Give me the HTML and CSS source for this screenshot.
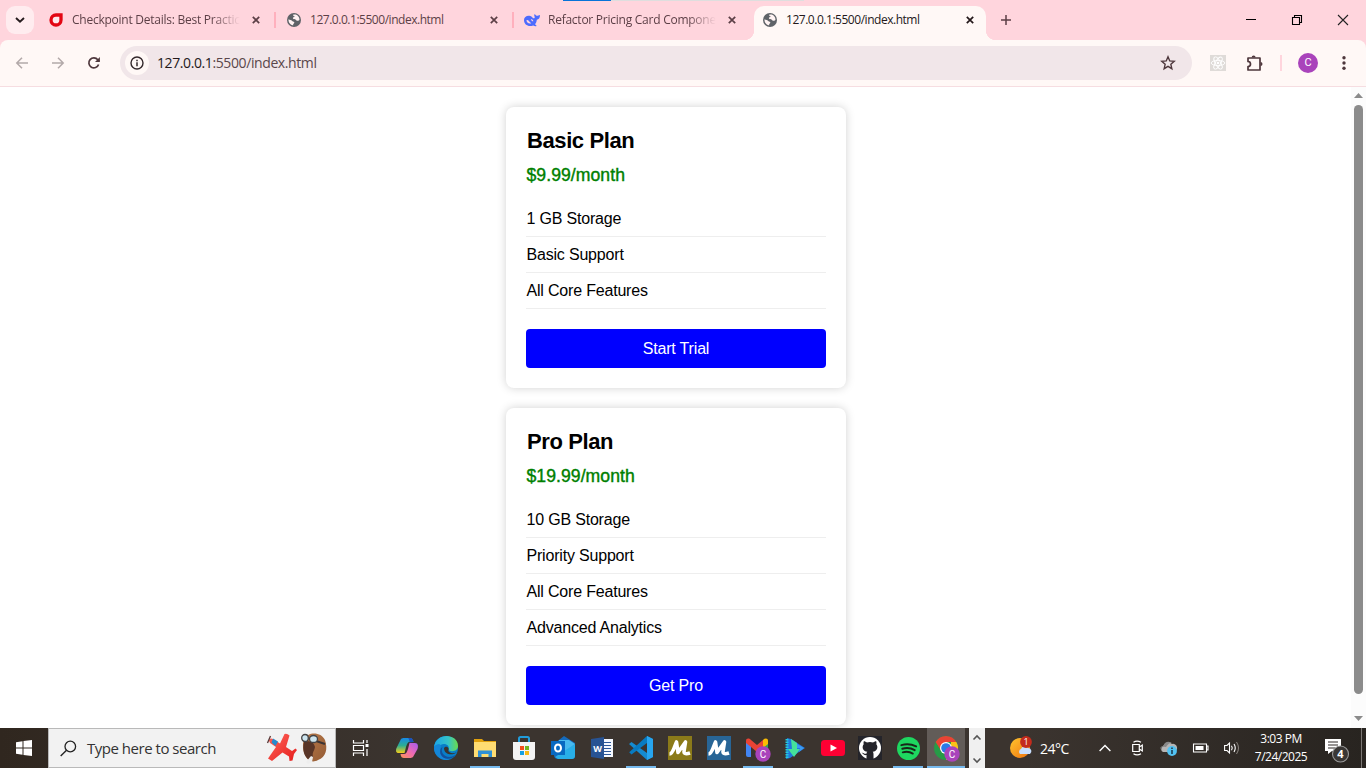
FILE: index.html
```html
<!DOCTYPE html>
<html lang="en">
<head>
<meta charset="utf-8">
<title>Pricing plans</title>
<link rel="stylesheet" href="styles.css">
</head>
<body>
<svg class="defs" width="0" height="0">
  <defs>
    <symbol id="close" viewBox="0 0 8 8"><path d="M.8.8l6.4 6.4M7.2.8L.8 7.2" fill="none" stroke="currentColor" stroke-width="1.7"/></symbol>
    <symbol id="globe" viewBox="0 0 14 14"><circle cx="7" cy="7" r="7" fill="#5f6368"/><path d="M1.500 6.300c1.400.8 2.700.5 3.700 1.600.9 1 2.300.5 2.100 1.800-.2 1-1.300.8-1.200 2.700C3.200 12 1.300 9.500 1.500 6.300z" fill="#fff3f3"/><path d="M6.300 1.500h2.500c2.200.8 3.600 2.700 3.700 5-.8 1.800-2.300 1.600-3.300.7-.5-1.200-1.500-1-2.800-1.300-1-.6-.4-1.600.8-1.800 1-.2.3-1.300-.9-1.200z" fill="#fff3f3"/></symbol>
    <linearGradient id="gCop1" x1="0" y1="0" x2="0" y2="1"><stop offset="0" stop-color="#1689e8"/><stop offset=".5" stop-color="#2cad93"/><stop offset="1" stop-color="#f5cf19"/></linearGradient>
    <linearGradient id="gCop2" x1="1" y1="0" x2="0" y2="1"><stop offset="0" stop-color="#a45bf0"/><stop offset=".5" stop-color="#ed69b3"/><stop offset="1" stop-color="#ff9655"/></linearGradient>
    <linearGradient id="gEdge" x1="0" y1="0" x2="1" y2="0"><stop offset="0" stop-color="#1ba4e8"/><stop offset=".6" stop-color="#35c4c7"/><stop offset="1" stop-color="#6bdc4b"/></linearGradient>
    <linearGradient id="gPlane" x1="0" y1="0" x2="1" y2="1"><stop offset="0" stop-color="#ff665b"/><stop offset="1" stop-color="#e51d1c"/></linearGradient>
    <linearGradient id="gPilot" x1="0" y1="0" x2="1" y2="1"><stop offset="0" stop-color="#b97b4b"/><stop offset="1" stop-color="#945b34"/></linearGradient>
    <linearGradient id="gSun" x1="0" y1="0" x2="1" y2="1"><stop offset="0" stop-color="#ffc52e"/><stop offset="1" stop-color="#ef7310"/></linearGradient>
  </defs>
</svg>
<div class="screen">
  <header class="tabstrip">
    <div class="loading"><i></i></div>
    <button class="tabsearch"><svg width="10" height="6" viewBox="0 0 10 6"><path d="M1 1l4 3.700L9 1" fill="none" stroke="#251b1d" stroke-width="1.900"/></svg></button>
    <div class="tab first">
      <svg class="fav" width="14" height="14" viewBox="0 0 14 14"><path d="M7 2h5v5a5 5 0 1 1-5-5z" fill="#ffe9ec" stroke="#e30613" stroke-width="3.300"/></svg>
      <span class="label fade">Checkpoint Details: Best Practic</span>
      <svg class="x" width="8" height="8"><use href="#close"/></svg>
    </div>
    <div class="tab">
      <svg class="fav" width="14" height="14"><use href="#globe"/></svg>
      <span class="label url">127.0.0.1:5500/index.html</span>
      <svg class="x" width="8" height="8"><use href="#close"/></svg>
    </div>
    <div class="tab whale">
      <svg class="fav" width="16" height="13" viewBox="0 0 16 13"><path d="M0 6C0 3 2.500 1.400 5.300 1.700c1.600.1 2.900 1.200 3.600 2.200.8.900 2 .4 1.800-.7C10.500 1.800 9.800 1 10.500.3c1 .3 1.300 1.400 2.200 1.500C14 2 14.500 1 16 .9c0 3-1.300 4.500-3.200 4.800-.2 2.300-.9 3.700-1.900 4.500l1.500 1-.2 1c-1.200.2-2.200-.3-3-.8C4.600 13.300 0 10.800 0 6z" fill="#4d6bfe"/><path d="M2.500 6c2-.6 2.800 1.800 4.700 3.300-2.500.8-4.800-.8-4.700-3.300zM6.800 5.500c1.300-.5 2.200.5 2.600 1.700-1.200.4-1.700-.6-2.600-1.700z" fill="#ffd5dd"/></svg>
      <span class="label fade">Refactor Pricing Card Compone</span>
      <svg class="x" width="8" height="8"><use href="#close"/></svg>
    </div>
    <div class="tab active">
      <svg class="fav" width="14" height="14"><use href="#globe"/></svg>
      <span class="label url">127.0.0.1:5500/index.html</span>
      <svg class="x" width="8" height="8"><use href="#close"/></svg>
    </div>
    <svg class="newtab" width="10" height="10" viewBox="0 0 10 10"><path d="M5 0v10M0 5h10" stroke="#5c3f46" stroke-width="1.500"/></svg>
    <div class="wincontrols">
      <svg width="10" height="10" viewBox="0 0 10 10"><path d="M0 4.500h10" stroke="#000"/></svg>
      <svg width="10" height="10" viewBox="0 0 10 10"><path d="M.5 2.500h7v7h-7zM2.500 2.500v-2h7v7h-2" fill="none" stroke="#000" stroke-width="1.100"/></svg>
      <svg width="10" height="10" viewBox="0 0 10 10"><path d="M0 0l10 10M10 0L0 10" stroke="#222" stroke-width="1.100"/></svg>
    </div>
  </header>
  <nav class="toolbar">
    <svg class="arrow" width="12" height="12" viewBox="0 0 12 12"><path d="M12 6H1M6 .7L.8 6 6 11.300" fill="none" stroke="#b3a9a9" stroke-width="1.500"/></svg>
    <svg class="arrow" width="12" height="12" viewBox="0 0 12 12"><path d="M0 6h11M6 .7L11.200 6 6 11.300" fill="none" stroke="#b3a9a9" stroke-width="1.500"/></svg>
    <svg class="reload" width="12" height="12" viewBox="0 0 12 12"><path d="M10.600 7.500A5 5 0 1 1 9.800 2.800L11 4.200" fill="none" stroke="#4e373c" stroke-width="1.700"/><path d="M11.900 0v5H7z" fill="#4e373c"/></svg>
    <div class="omnibox">
      <span class="info"><svg width="14" height="14" viewBox="0 0 14 14"><circle cx="7" cy="7" r="6" fill="none" stroke="#33282b" stroke-width="1.400"/><path d="M7 6.200V10.200M7 3.700v1.500" stroke="#33282b" stroke-width="1.500"/></svg></span>
      <span class="address"><b>127.0.0.1</b>:5500/index.html</span>
      <svg class="star" width="16" height="16" viewBox="0 0 16 16"><path d="M8 1.800l1.750 4.100 4.500.4-3.400 3 1 4.400L8 11.400l-3.850 2.300 1-4.400-3.400-3 4.500-.4z" fill="none" stroke="#4e373c" stroke-width="1.400"/></svg>
    </div>
    <svg class="react" width="16" height="16" viewBox="0 0 16 16"><path fill="#dfdbd8" d="M0 0h16v16H0z"/><g fill="none" stroke="#fff" stroke-width=".9"><ellipse cx="8" cy="8" rx="6.800" ry="2.600"/><ellipse cx="8" cy="8" rx="6.800" ry="2.600" transform="rotate(60 8 8)"/><ellipse cx="8" cy="8" rx="6.800" ry="2.600" transform="rotate(120 8 8)"/></g><circle cx="8" cy="8" r="1.300" fill="#fff"/></svg>
    <svg class="puzzle" width="17" height="17" viewBox="0 0 17 17"><path d="M2 3h12v12H2v-3.500a2.400 2.400 0 0 0 0-5z" fill="none" stroke="#4e373c" stroke-width="1.700" stroke-linejoin="round"/><path d="M5.600 2.500a2 2 0 0 1 4 0zM14.500 7a2 2 0 0 1 0 4z" fill="#4e373c"/></svg>
    <i class="sep"></i>
    <span class="avatar">C</span>
    <svg class="dots" width="4" height="14" viewBox="0 0 4 14"><g fill="#4e373c"><circle cx="2" cy="1.700" r="1.700"/><circle cx="2" cy="7" r="1.700"/><circle cx="2" cy="12.300" r="1.700"/></g></svg>
  </nav>
  <div class="viewport">
    <main class="page">
      <section class="card">
        <h2>Basic Plan</h2>
        <p class="price">$9.99/month</p>
        <ul><li>1 GB Storage</li><li>Basic Support</li><li>All Core Features</li></ul>
        <button class="cta">Start Trial</button>
      </section>
      <section class="card">
        <h2>Pro Plan</h2>
        <p class="price">$19.99/month</p>
        <ul><li>10 GB Storage</li><li>Priority Support</li><li>All Core Features</li><li>Advanced Analytics</li></ul>
        <button class="cta">Get Pro</button>
      </section>
    </main>
    <div class="scrollbar">
      <svg width="9" height="5" viewBox="0 0 9 5"><path d="M0 5L4.500 0 9 5z" fill="#8b8b8b"/></svg>
      <i></i>
      <svg width="9" height="5" viewBox="0 0 9 5"><path d="M0 0l4.500 5L9 0z" fill="#8b8b8b"/></svg>
    </div>
  </div>
  <footer class="taskbar">
    <div class="start"><svg width="16" height="16" viewBox="0 0 16 16"><path d="M0 2.200L6.500 1.200V7.500H0zM7.500 1L16 0v7.500H7.500zM0 8.500h6.500v6.300L0 13.800zM7.500 8.500H16V16l-8.500-1.100z" fill="#fff"/></svg></div>
    <div class="search">
      <svg width="17" height="17" viewBox="0 0 17 17"><circle cx="10.300" cy="6.500" r="5.300" fill="none" stroke="#222" stroke-width="1.300"/><path d="M6.500 10.300L.7 16" stroke="#222" stroke-width="1.400"/></svg>
      <span>Type here to search</span>
      <svg class="plane" width="30" height="30" viewBox="0 0 30 30"><path d="M2 7.500Q3 4.500 6 6l7 4.500L17.500 1q2.500-1 5 1.500L19 14l6 4 3.500-2.500 1.500 1.500-3 4-1.500 6.500-3 .5-.5-4.500-6.500-4L5 28l-4-2.500L9 14 3 10z" fill="url(#gPlane)"/><path d="M6 5.500l5 3-2.500 4.500-4-3.500z" fill="#278acd"/><path d="M3.500 3l-3 7" stroke="#593737" stroke-width="1.300"/></svg>
      <svg class="pilot" width="26" height="32" viewBox="0 0 26 32"><path d="M3 7C7-.5 20-.5 24 8c3 9 1 17-7 20-5 3-10 1-12-3C2 20 1 13 3 7z" fill="url(#gPilot)"/><path d="M3 10c5-2 10 0 11 5-1 5-3 5-2 10l-3 3c-6-2-8-11-6-18z" fill="#583527"/><path d="M5 30l5-6 2 1-1 5-4 2z" fill="#eee"/><path d="M15 9l9 3" stroke="#3c3433" stroke-width="2"/><ellipse cx="4" cy="6" rx="3.300" ry="3.500" fill="#cce4ee" stroke="#444345" stroke-width="1.300"/><ellipse cx="12.500" cy="7" rx="4" ry="3.500" fill="#cce4ee" stroke="#444345" stroke-width="1.300"/></svg>
    </div>
    <div class="taskview"><svg width="17" height="16" viewBox="0 0 17 16"><path d="M1.500 0v3h10V0M1.500 16v-3h10v3M1.500 5.500h10v5h-10zM15 0v3M15 9v7" fill="none" stroke="#fff" stroke-width="1.200"/><path d="M13.500 4h3v3h-3z" fill="#fff"/></svg></div>
    <div class="apps">
      <div><svg width="24" height="24" viewBox="0 0 24 24"><path d="M6 3C7.500 1.700 9 2 11 2h4c2 0 3 2 3.500 4h-4c-2 0-2.500 2-3.500 5l-1.500 6H4c-3 0-3.500-2-2.500-5z" fill="url(#gCop1)"/><path d="M18 21c-1.500 1.300-3 1-5 1H9c-2 0-3-1-3.500-4H9c2 0 3-2 4-5l1.500-6H20c3 0 3.500 3 2.500 6z" fill="url(#gCop2)"/><path d="M13 2h3c1.500.5 2 2 2.500 4l-4 .5c0-2-.3-3.500-1.500-4.500z" fill="#1c52bc"/></svg></div>
      <div><svg width="24" height="24" viewBox="0 0 24 24"><circle cx="12" cy="12" r="12" fill="#087ec8"/><path d="M0 12C1-4 24-3 24 10c0 5-6 6.500-9.500 4 2-5-4-7.500-8-5C3 8 0 10 0 12z" fill="url(#gEdge)"/><path d="M7 10c-3 7 1 13 9 13.300C9 26 0 20 0 12c1-4 6-5 7-2z" fill="#1486d8"/><path d="M8.500 11c-3 6 4 13.500 13 8-3 4.500-12 6-15-1-1-3 0-6 2-7z" fill="#12509c"/><path d="M10 12c2-3 6 0 4.300 2.300 0 2.700 5 4 8.700 1.700-4 4-13 3-13-4z" fill="#3a342f"/></svg></div>
      <div class="run"><svg width="24" height="24" viewBox="0 0 24 24"><path d="M1 3h8l2 2h12v4H1z" fill="#e2a10d"/><path d="M1 6h22v15H1z" fill="#ffdc72"/><path d="M5 21v-6.500h14V21h-3.500v-3h-7v3z" fill="#2f91d6"/></svg></div>
      <div><svg width="24" height="24" viewBox="0 0 24 24"><path d="M7 7V2.500Q7 1 8.500 1h7Q17 1 17 2.500V7" fill="none" stroke="#219cdb" stroke-width="2"/><path d="M1 6h22v15q0 3-3 3H4q-3 0-3-3z" fill="#f4f4f4"/><path d="M8 10h4v4H8z" fill="#f34f1c"/><path d="M13 10h4v4h-4z" fill="#72b622"/><path d="M8 15h4v4H8z" fill="#159fe2"/><path d="M13 15h4v4h-4z" fill="#f7b915"/></svg></div>
      <div><svg width="26" height="24" viewBox="0 0 26 24"><path d="M4 8l10-8 11 7v12q0 4-4 4H8q-4 0-4-4z" fill="#146bbd"/><path d="M9 4h10l6 4-10 9-8-5z" fill="#48b9ef"/><path d="M5 21L25 8v12q0 3-3 3H8z" fill="#28aee7"/><path d="M1 5h14v14H1z" fill="#0869c1"/><ellipse cx="8" cy="12" rx="3" ry="3.500" fill="none" stroke="#fff" stroke-width="2"/></svg></div>
      <div><svg width="24" height="24" viewBox="0 0 24 24"><path d="M12 3h11v18H12z" fill="#f5f8ff"/><path d="M14 6.500h7M14 9.500h7M14 12.500h7M14 15.500h7M14 18.500h7" stroke="#2b579a"/><path d="M1 3l13-2v22L1 21z" fill="#285393"/><text x="7.500" y="15.500" class="wordletter">W</text></svg></div>
      <div class="run"><svg width="24" height="24" viewBox="0 0 24 24"><path d="M18 0l6 3v18l-6 3L0 8l2.500-2L18 17z" fill="#158bd0"/><path d="M18 0v7L2.500 18.500.2 16.300z" fill="#087bc1"/><path d="M18 0l6 3v18l-6 3z" fill="#27a5ef"/></svg></div>
      <div><svg width="24" height="24" viewBox="0 0 24 24"><path d="M0 0h24v24H0z" fill="#8b7a19"/><path d="M1.500 18C5 18 6.500 10 8.500 6l1.500 10.500L17.500 6 16 15.500q0 3.500 6 1.500" fill="none" stroke="#fff" stroke-width="3.600" stroke-linejoin="round"/></svg></div>
      <div><svg width="24" height="24" viewBox="0 0 24 24"><path d="M0 0h24v24H0z" fill="#286596"/><path d="M1.500 18C5 18 6.500 10 8.500 6l1.500 10.500L17.500 6 16 15.500q0 3.500 6 1.500" fill="none" stroke="#fff" stroke-width="3.600" stroke-linejoin="round"/></svg></div>
      <div class="run"><svg width="26" height="24" viewBox="0 0 26 24"><path d="M1 5h5v16H3q-2 0-2-2z" fill="#4285f4"/><path d="M18 5h5v14q0 2-2 2h-3z" fill="#34a853"/><path d="M1 5c0-3 3-3 5-1l6 5 6-5v7l-6 5-6-5-5-4z" fill="#e94335"/><path d="M18 4c2-2 5-2 5 1v3l-5 4z" fill="#fbbc04"/><circle cx="18" cy="18" r="7.700" fill="#a943bb"/><text x="18" y="21.500" class="badgeletter">C</text></svg></div>
      <div><svg width="22" height="24" viewBox="0 0 22 24"><path d="M2 2l4 1 14 9L5 22l-4 1z" fill="#2176dd"/><path d="M2 3v19" stroke="#23ccdd" stroke-width="3" stroke-dasharray="1.500 1"/><path d="M6 3l6 4v6h3l-6 8-6-8h4z" fill="#45e29a"/><path d="M12 8l7 4-5 4 1-4h-3z" fill="#3b9af2"/></svg></div>
      <div><svg width="24" height="24" viewBox="0 0 24 24"><rect y="4" width="24" height="16" rx="3.500" fill="#ff0033"/><path d="M9.500 8.500l6.500 3.500-6.500 3.500z" fill="#fff"/></svg></div>
      <div><svg width="24" height="24" viewBox="0 0 24 24"><path d="M0 0h24v24H0z" fill="#24242a"/><circle cx="12" cy="12" r="11" fill="#fff"/><path d="M8.500 23v-4c-3 .8-3.500-1.800-5-2.200 2-.8 2 1.500 5 1 0-1 .3-1.400.8-2C5 15 4.500 12.500 4.700 10.500c.1-1 .5-1.800 1-2.300-.4-1-.2-2 .1-3 1.200 0 2.200.7 3.100 1.300a12 12 0 0 1 6.200 0c.9-.6 1.900-1.300 3.100-1.300.3 1 .5 2 .1 3 .5.5.9 1.300 1 2.300.2 2-.3 4.500-4.600 5.300.7.700.8 1.500.8 2.700V23z" fill="#24242a"/></svg></div>
      <div class="run"><svg width="23" height="23" viewBox="0 0 24 24"><circle cx="12" cy="12" r="12" fill="#1ed760"/><path d="M4.500 8.500q8-2.300 15.500 1.300M5.500 12.300q7-2 13 1.400M6 16q6-1.500 10.500 1.300" fill="none" stroke="#182719" stroke-width="2" stroke-linecap="round"/></svg></div>
      <div class="run current"><svg width="26" height="26" viewBox="0 0 26 26"><circle cx="12" cy="12" r="12" fill="#269b47"/><path d="M1.600 6A12 12 0 0 1 22.400 6H12L7 14.500z" fill="#e94335"/><path d="M22.400 6A12 12 0 0 1 12 24l5-10V6z" fill="#fbc116"/><circle cx="12" cy="12" r="6" fill="#fff"/><circle cx="12" cy="12" r="4.800" fill="#297ae8"/><circle cx="18" cy="18" r="7.700" fill="#a943bb"/><text x="18" y="21.500" class="badgeletter">C</text></svg></div>
    </div>
    <div class="overflow"><svg width="8" height="5" viewBox="0 0 8 5"><path d="M.5 4.500L4 1l3.500 3.500" fill="none" stroke="#555" stroke-width="1.600"/></svg><svg width="8" height="5" viewBox="0 0 8 5"><path d="M.5.5L4 4 7.500.5" fill="none" stroke="#555" stroke-width="1.600"/></svg></div>
    <div class="tray">
      <svg class="weather" width="23" height="23" viewBox="0 0 23 23"><circle cx="10" cy="12" r="10" fill="url(#gSun)"/><path d="M10 18a3 3 0 0 1 1-5 4 4 0 0 1 7-1 3.300 3.300 0 0 1 2 6z" fill="#c8dfff"/><circle cx="16" cy="6" r="5.900" fill="#c42b1c"/><text x="16" y="9.200" class="alertnumber">1</text></svg>
      <span class="temp">24°C</span>
      <svg class="chevron" width="12" height="8" viewBox="0 0 12 8"><path d="M.6 7L6 1.500 11.400 7" fill="none" stroke="#fff" stroke-width="1.400"/></svg>
      <svg class="meet" width="11" height="16" viewBox="0 0 11 16"><path d="M.7 4.500h6.600v7H.7zM7.300 7l3-2v6l-3-2M1.500 2.300Q5 0 9 2.300M1.500 13.700Q5 16 9 13.700" fill="none" stroke="#fff" stroke-width="1.200"/></svg>
      <svg class="cloud" width="17" height="15" viewBox="0 0 17 15"><path d="M3 11a3 3 0 0 1 0-5.500A5.500 5.500 0 0 1 12 3a4 4 0 0 1 2 8z" fill="#b5b5b5"/><path d="M0 9q1-4 6-3 4-6 7-3-4-4-8-1-1 1-1.500 3Q0 5 0 9z" fill="#888"/><circle cx="12" cy="10" r="4.900" fill="#52c2f2"/><path d="M12 9v4M12 6.500V8" stroke="#183447" stroke-width="1.500"/></svg>
      <svg class="battery" width="16" height="10" viewBox="0 0 16 10"><path d="M.5 1h13v8H.5zM13.500 3H15v4h-1.500" fill="none" stroke="#fff" stroke-width="1.100"/><path d="M2.500 3h8v4h-8z" fill="#fff"/></svg>
      <svg class="sound" width="16" height="14" viewBox="0 0 16 14"><path d="M.6 4.500H3L5.500 2v10L3 9.500H.6z" fill="none" stroke="#fff" stroke-width="1.100"/><path d="M7.500 4.800Q9 7 7.500 9.200M10 3q2.500 4 0 8" fill="none" stroke="#fff" stroke-width="1.100"/><path d="M12.500 1q4 6 0 12" fill="none" stroke="#8a8580"/></svg>
      <div class="clock"><span>3:03 PM</span><span>7/24/2025</span></div>
      <svg class="notify" width="25" height="26" viewBox="0 0 25 26"><path d="M0 2h16v12H7l-4 3v-3H0z" fill="#fff"/><path d="M3 5h10M3 8h10M3 11h7" stroke="#302b28" stroke-width="1.200"/><circle cx="15.500" cy="17" r="8" fill="#3a3735" stroke="#999" stroke-width="1.100"/><text x="15.500" y="21" class="notifynumber">4</text></svg>
      <i class="desktop"></i>
    </div>
  </footer>
</div>
</body>
</html>
```
FILE: styles.css
```css
* { box-sizing: border-box; }
body { margin: 0; background: #fff; font-family: "Open Sans", "Noto Sans", sans-serif; }
svg { display: block; flex: none; overflow: visible; }
button { border: 0; padding: 0; }
.defs { position: absolute; }
.screen { width: 1366px; height: 768px; display: flex; flex-direction: column; overflow: hidden; }

.tabstrip { height: 40px; flex: none; display: flex; background: #ffd5dd; position: relative; color: #5c3f46; }
.loading { position: absolute; left: 563px; top: 0; width: 241px; height: 1px; background: #dedede; }
.loading i { display: block; width: 48px; height: 1px; background: #0873d8; }
.tabsearch { width: 28px; height: 28px; margin: 6px 15px 0 6px; border-radius: 9px; background: #ffecef; display: flex; align-items: center; justify-content: center; }
.tab { width: 238px; height: 40px; display: flex; align-items: center; position: relative; }
.tab.first { width: 225px; }
.tab .fav { margin-left: 13px; }
.tab.first .fav { margin-left: 0; }
.tab.whale .fav { margin: 0 -1px 0 12px; }
.tab .label { width: 168px; margin-left: 9px; font-size: 12px; letter-spacing: -.25px; line-height: 20px; white-space: nowrap; }
.tab .url { letter-spacing: -.47px; }
.tab .fade { -webkit-mask-image: linear-gradient(90deg, #000 83%, transparent 100%); mask-image: linear-gradient(90deg, #000 83%, transparent 100%); }
.tab .x { margin-left: 12px; }
.tab.first::after, .tab.first + .tab::after { content: ""; position: absolute; right: -2px; top: 12px; width: 2px; height: 16px; background: #ffb0bd; }
.tab.active { width: 232px; margin-left: 4px; color: #24191b; }
.tab.active::before { content: ""; position: absolute; inset: 6px 0 0; background: #fff8f6; border-radius: 10px 10px 0 0; }
.tab.active::after { content: ""; position: absolute; left: -10px; right: -10px; bottom: 0; height: 10px; background: radial-gradient(circle at 0 0, transparent 10px, #fff8f6 10.5px) 0 0 / 10px 10px no-repeat, radial-gradient(circle at 100% 0, transparent 10px, #fff8f6 10.5px) 100% 0 / 10px 10px no-repeat; }
.tab.active > * { position: relative; }
.tab.active .fav { margin-left: 9px; }
.newtab { margin: 15px 0 0 15px; }
.wincontrols { margin-left: auto; display: flex; gap: 36px; padding: 15px 18px 0 0; }

.toolbar { height: 47px; flex: none; display: flex; align-items: center; padding: 0 20px 0 16px; background: #fff8f6; border-bottom: 1px solid #f6dde1; border-radius: 8px 8px 0 0; position: relative; }
.toolbar::before { content: ""; position: absolute; inset: 0; z-index: -1; height: 10px; background: #ffd5dd; }
.arrow { margin-right: 24px; }
.reload { margin-right: 20px; }
.omnibox { width: 1072px; height: 34px; border-radius: 17px; background: #f1e6e9; display: flex; align-items: center; flex: none; padding: 0 16px 0 5px; }
.info { width: 24px; height: 24px; border-radius: 50%; background: #fff8f6; display: flex; align-items: center; justify-content: center; }
.address { margin: -1px 0 0 8px; font-size: 14px; letter-spacing: -.4px; color: #5a474b; }
.address b { font-weight: 400; color: #24191b; }
.star { margin-left: auto; }
.react { margin-left: 18px; }
.puzzle { margin-left: 20px; }
.sep { width: 2px; height: 16px; margin-left: 17px; background: #ffd5dd; flex: none; }
.avatar { width: 20px; height: 20px; flex: none; margin-left: 16px; border-radius: 50%; background: #a943bb; color: #fff; font: 11px/20px Roboto, sans-serif; text-align: center; }
.dots { margin-left: 24px; }

.viewport { height: 641px; flex: none; display: flex; overflow: hidden; }
.page { flex: 1; padding-top: 20px; display: flex; flex-direction: column; align-items: center; gap: 20px; font-family: "Liberation Sans", Arial, sans-serif; }
.card { width: 340px; padding: 20px; border-radius: 8px; background: #fff; box-shadow: 0 0 10px rgba(0, 0, 0, .18); }
.card h2 { margin: 0 0 11px; padding: 1px 0 0 1px; font-size: 22px; line-height: 26px; letter-spacing: -.4px; }
.price { margin: 0 0 16px; padding-left: .5px; color: green; font-size: 17.6px; line-height: 20px; letter-spacing: .06px; -webkit-text-stroke: .4px green; }
.card ul { margin: 0 0 20px; padding: 0; list-style: none; }
.card li { height: 36px; padding-left: .5px; border-bottom: 1px solid #eee; font-size: 16px; line-height: 35px; letter-spacing: -.19px; }
.cta { display: block; width: 100%; height: 39px; border-radius: 4px; background: #00f; color: #fff; font: 16px "Liberation Sans", Arial, sans-serif; letter-spacing: -.18px; }
.scrollbar { width: 15px; margin-left: -1px; background: #fcfcfc; display: flex; flex-direction: column; align-items: center; padding: 6px 0 7px; }
.scrollbar i { width: 9px; height: 589px; margin: 7px 0 auto; border-radius: 5px; background: #8b8b8b; }

.taskbar { height: 40px; flex: none; display: flex; background: linear-gradient(90deg, #30271f, #3b342f 30%, #3b342f 75%, #282420); color: #fff; }
.start { width: 48px; display: flex; align-items: center; justify-content: center; }
.search { width: 288px; height: 40px; border: 1px solid #b9b9b9; background: #f2f2f2; display: flex; align-items: center; padding-left: 11px; color: #333; }
.search span { width: 180px; margin-left: 10px; font-size: 15px; letter-spacing: -.48px; white-space: nowrap; }
.pilot { margin-left: 4px; }
.taskview { width: 48px; margin-right: 3px; flex: none; display: flex; align-items: center; justify-content: center; }
.apps { flex: none; display: grid; grid-template-columns: repeat(10, 39px) repeat(2, 37px) repeat(3, 38px); }
.apps div { display: flex; align-items: center; justify-content: center; }
.apps .run { background: linear-gradient(#76b9ed, #76b9ed) center bottom / 30px 2px no-repeat; }
.apps .current { background: linear-gradient(#76b9ed, #76b9ed) center bottom / 100% 2px no-repeat, #625c58; }
.apps .current svg { margin: 2px 0 0 2px; }
.wordletter { font: bold 9px "Open Sans", sans-serif; fill: #fff; text-anchor: middle; }
.badgeletter { font: 10px Roboto, sans-serif; fill: #fff; text-anchor: middle; }
.overflow { width: 16px; flex: none; margin-left: 4px; background: #f0f0f0; display: flex; flex-direction: column; align-items: center; justify-content: space-between; padding: 7px 1px 5px 0; }
.tray { flex: 1; display: flex; align-items: center; padding-left: 25px; }
.weather { margin-top: -2px; }
.alertnumber { font: 9px "Open Sans", sans-serif; fill: #fff; text-anchor: middle; }
.temp { width: 30px; margin-left: 7px; font-size: 14px; letter-spacing: -.5px; white-space: nowrap; }
.chevron { margin-left: 29px; }
.meet { margin-left: 21px; }
.cloud { margin-left: 17px; }
.battery { margin-left: 16px; }
.sound { margin-left: 15px; }
.clock { width: 58px; margin-left: 12px; display: flex; flex-direction: column; align-items: center; font-size: 12px; line-height: 18px; letter-spacing: -.5px; white-space: nowrap; }
.notify { margin: 3px 0 0 15px; }
.notifynumber { font: bold 11px "Open Sans", sans-serif; fill: #fff; text-anchor: middle; }
.desktop { width: 1px; height: 40px; margin-left: 11px; background: #7b7774; }
```
